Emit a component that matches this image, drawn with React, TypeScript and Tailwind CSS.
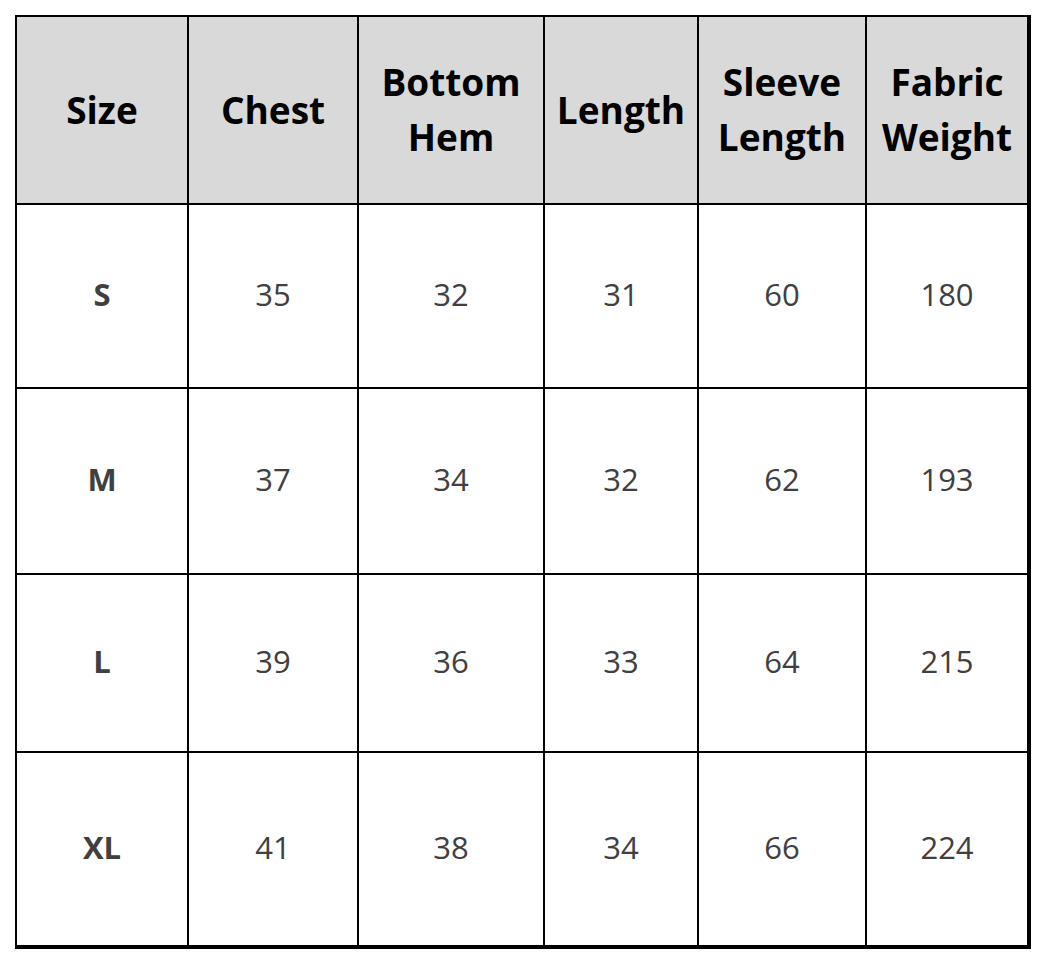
const headers = [["Size"], ["Chest"], ["Bottom", "Hem"], ["Length"], ["Sleeve", "Length"], ["Fabric", "Weight"]];

const rows = [
  { size: "S", values: ["35", "32", "31", "60", "180"], h: "h-[182px]" },
  { size: "M", values: ["37", "34", "32", "62", "193"], h: "h-[184px]" },
  { size: "L", values: ["39", "36", "33", "64", "215"], h: "h-[176px]" },
  { size: "XL", values: ["41", "38", "34", "66", "224"], h: "h-[192px]" },
];

export default function App() {
  return (
    <div className="min-h-screen bg-white pl-[15px] pt-[15px] font-['Open_Sans','Liberation_Sans',sans-serif]">
      <div className="grid w-[1016px] grid-cols-[170px_168px_184px_152px_166px_160px] gap-[2px] bg-black pb-[4px] pl-[2px] pr-[4px] pt-[2px]">
        {headers.map((lines, i) => (
          <div
            key={i}
            className="flex h-[186px] flex-col items-center justify-center bg-[#d9d9d9] pb-[2px] text-[37px] font-bold leading-[55px] text-black"
          >
            {lines.map((l) => (
              <span key={l}>{l}</span>
            ))}
          </div>
        ))}
        {rows.map((r) => (
          <div key={r.size} className="contents">
            <div className={`flex ${r.h} items-center justify-center bg-white pb-[3px] text-[31px] font-bold text-[#404040]`}>
              {r.size}
            </div>
            {r.values.map((v, j) => (
              <div key={j} className={`flex ${r.h} items-center justify-center bg-white pb-[3px] text-[31px] text-[#404040]`}>
                {v}
              </div>
            ))}
          </div>
        ))}
      </div>
    </div>
  );
}
